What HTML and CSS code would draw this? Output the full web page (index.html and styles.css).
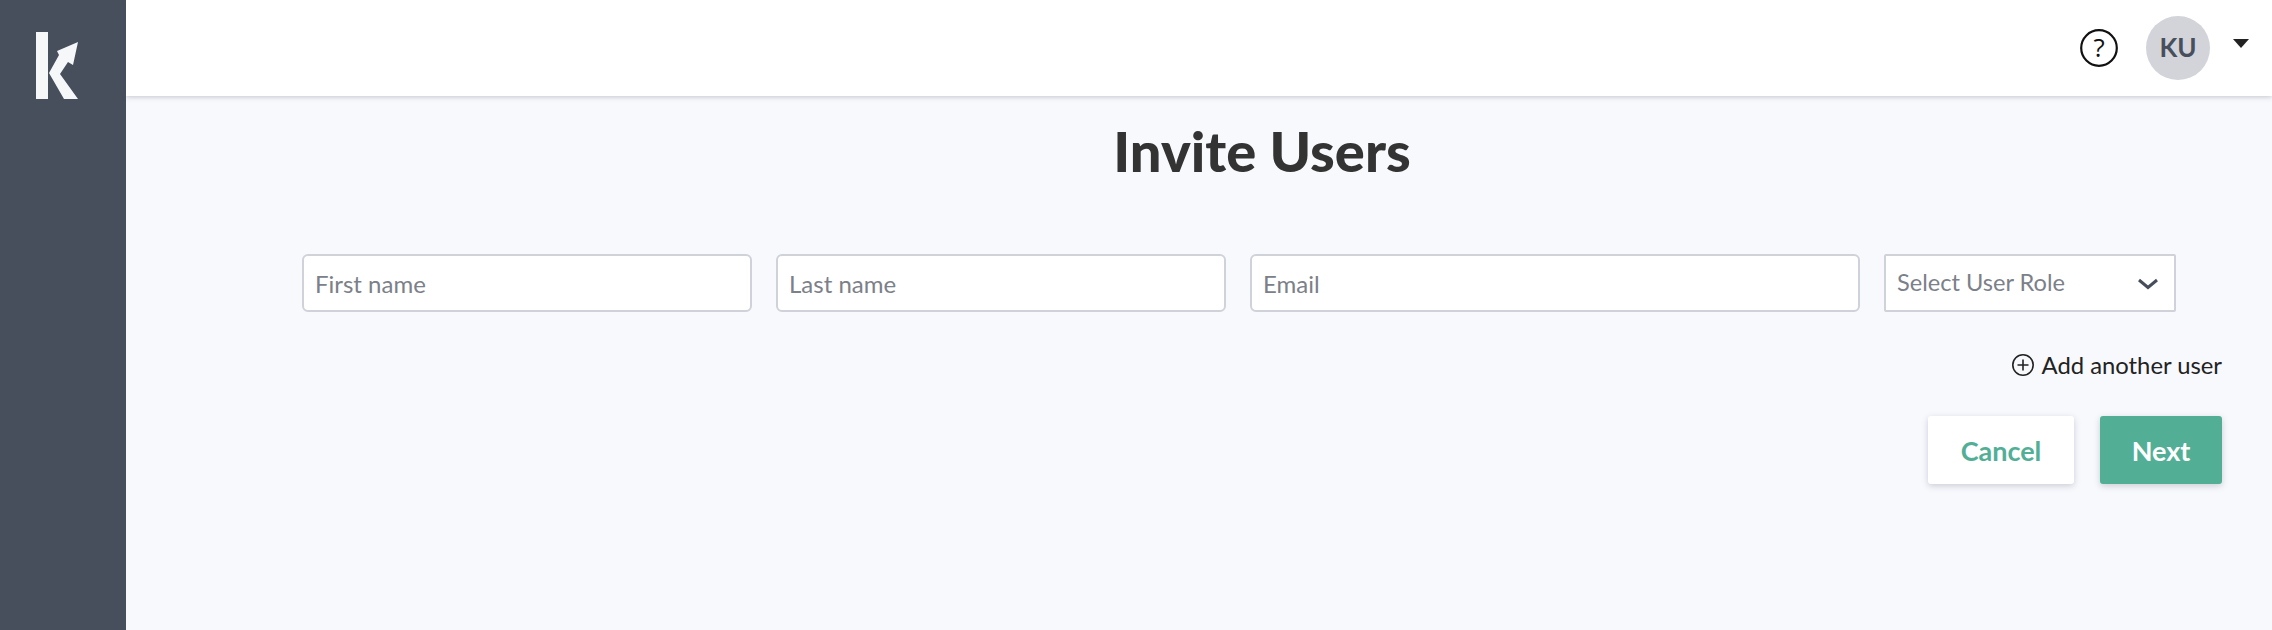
FILE: index.html
```html
<!DOCTYPE html>
<html>
<head>
    <title>Invite Users</title>
    <link rel="stylesheet" href="styles.css">
</head>
<body>
    <div class="app">
        <div class="sidebar">
            <svg class="logo" width="126" height="130" viewBox="0 0 126 130">
                <rect x="36" y="32" width="12" height="67" fill="#f6f7f9"/>
                <path d="M78 42 L57 51 L59 55 L49 73 L64 99 L78 99 L60 74 L68 62 L73 65 Z" fill="#f6f7f9"/>
            </svg>
        </div>
        <div class="main">
            <div class="topbar">
                <svg class="help" width="38" height="38" viewBox="0 0 38 38">
                    <circle cx="19" cy="19" r="17.8" fill="none" stroke="#111" stroke-width="2.2"/>
                    <text x="19" y="28" text-anchor="middle" class="help-mark">?</text>
                </svg>
                <div class="avatar">KU</div>
                <div class="caret"></div>
            </div>
            <div class="content">
                <h1>Invite Users</h1>
                <div class="user-row">
                    <input class="field name" placeholder="First name">
                    <input class="field name" placeholder="Last name">
                    <input class="field email" placeholder="Email">
                    <div class="role">
                        <span>Select User Role</span>
                        <svg class="chevron" width="20" height="12" viewBox="0 0 20 12">
                            <path d="M1 2 L10 9.5 L19 2" fill="none" stroke="#464e5c" stroke-width="3"/>
                        </svg>
                    </div>
                </div>
                <div class="add-user">
                    <svg width="22" height="24" viewBox="0 0 22 24">
                        <circle cx="11" cy="12" r="10.2" fill="none" stroke="#222" stroke-width="1.6"/>
                        <path d="M11 6.5 V17.5 M5.5 12 H16.5" stroke="#222" stroke-width="1.6"/>
                    </svg>
                    <span>Add another user</span>
                </div>
                <div class="actions">
                    <button class="btn cancel">Cancel</button>
                    <button class="btn next">Next</button>
                </div>
            </div>
        </div>
    </div>
</body>
</html>
```

FILE: styles.css
```css
* {
    box-sizing: border-box;
}
body {
    margin: 0;
    font-family: Lato, "Open Sans", sans-serif;
    color: #333;
    background-color: #f8f9fd;
}
.app {
    display: flex;
    height: 630px;
    overflow: hidden;
}
.sidebar {
    width: 126px;
    flex-shrink: 0;
    background-color: #474f5d;
}
.logo {
    display: block;
}
.main {
    flex: 1;
}
.topbar {
    display: flex;
    align-items: center;
    justify-content: flex-end;
    height: 96px;
    padding-right: 23px;
    background-color: #fff;
    box-shadow: 0 1px 5px rgba(70, 78, 100, 0.3);
}
.help {
    margin-right: 28px;
}
.help-mark {
    font-family: "Open Sans", sans-serif;
    font-size: 26px;
    fill: #111;
}
.avatar {
    display: flex;
    align-items: center;
    justify-content: center;
    width: 64px;
    height: 64px;
    padding-bottom: 2px;
    border-radius: 50%;
    background-color: #d2d4da;
    color: #474f5d;
    font-size: 26px;
    font-weight: 700;
}
.caret {
    width: 0;
    height: 0;
    margin: 0 0 10px 23px;
    border-left: 8px solid transparent;
    border-right: 8px solid transparent;
    border-top: 9px solid #222;
}
.content {
    padding: 22px 50px 0 176px;
}
h1 {
    margin: 0;
    font-size: 56px;
    line-height: 66px;
    font-weight: 900;
    text-align: center;
    color: #333;
}
.user-row {
    display: flex;
    gap: 24px;
    margin-top: 70px;
    padding-right: 46px;
}
.field {
    height: 58px;
    padding: 0 11px;
    border: 2px solid #d0d2d9;
    border-radius: 6px;
    background-color: #fff;
    font-family: inherit;
    font-size: 24px;
    outline: none;
}
.field::placeholder {
    color: #7c8089;
    opacity: 1;
}
.name {
    width: 450px;
}
.email {
    width: 610px;
}
.role {
    display: flex;
    align-items: center;
    justify-content: space-between;
    width: 292px;
    height: 58px;
    padding: 0 16px 3px 11px;
    border: 2px solid #d0d2d9;
    border-radius: 2px;
    background-color: #fff;
    color: #7c8089;
    font-size: 23.6px;
}
.chevron {
    margin-top: 5px;
}
.add-user {
    display: flex;
    align-items: center;
    justify-content: flex-end;
    gap: 8px;
    margin-top: 39px;
    font-size: 23.8px;
    color: #222;
}
.actions {
    display: flex;
    justify-content: flex-end;
    gap: 26px;
    margin-top: 37px;
}
.btn {
    height: 68px;
    border: none;
    border-radius: 3px;
    font-family: inherit;
    font-size: 27px;
    font-weight: 700;
    box-shadow: 0 2px 6px rgba(70, 78, 100, 0.25);
}
.cancel {
    width: 146px;
    background-color: #fff;
    color: #52af96;
}
.next {
    width: 122px;
    background-color: #52af96;
    color: #fff;
}
```
